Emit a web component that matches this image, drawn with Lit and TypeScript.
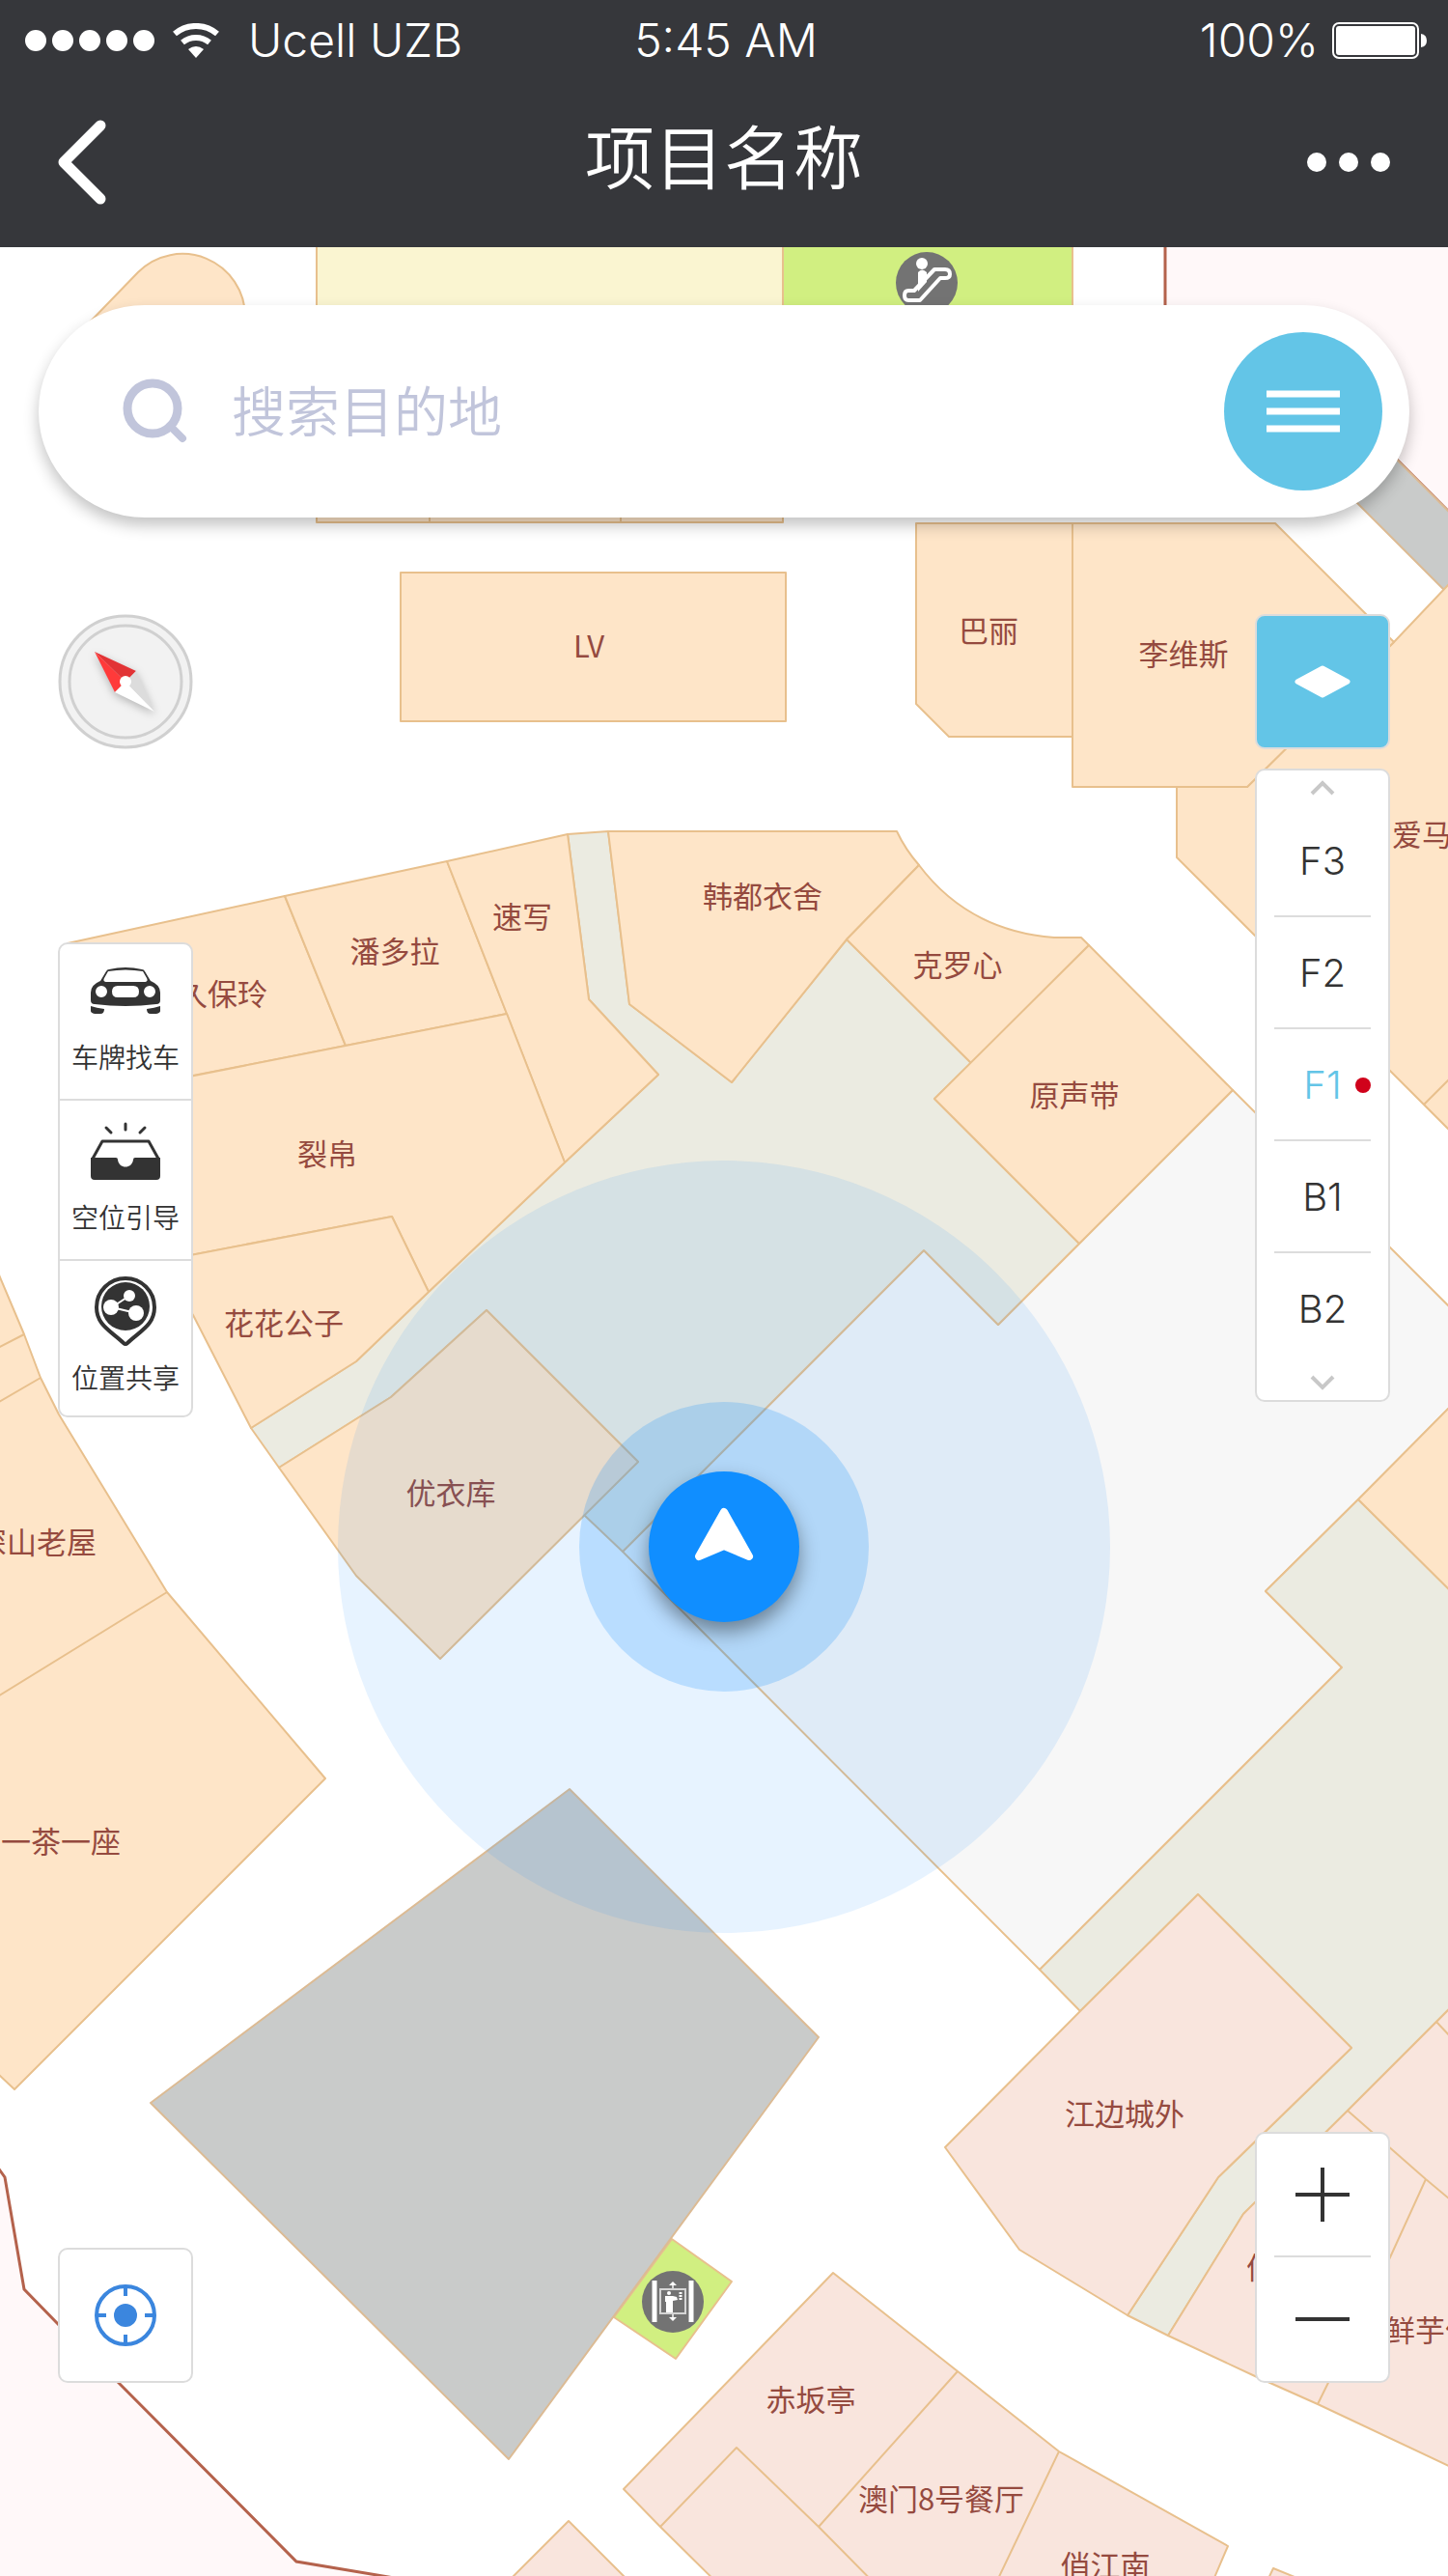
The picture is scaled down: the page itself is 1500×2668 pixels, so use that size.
import { LitElement, html, svg, css } from "lit";
import { customElement, state } from "lit/decorators.js";

type Kind = "shop" | "food" | "hall" | "court" | "solid" | "lift" | "lounge" | "line";

interface Area {
  kind: Kind;
  d: string;
}

interface Label {
  text: string;
  x: number;
  y: number;
  anchor?: "start" | "middle" | "end";
}

const AREAS: Area[] = [
  // upper strip
  { kind: "shop", d: "M82 345L143 282A65 65 0 0 1 254 328V382H82Z" },
  { kind: "lounge", d: "M328 240H811V400H328Z" },
  { kind: "lift", d: "M811 240H1111V400H811Z" },
  { kind: "shop", d: "M328 400H811V541H328ZM445 400V541M643 400V541" },
  { kind: "solid", d: "M1340 369L1520 549V635L1340 455Z" },
  { kind: "shop", d: "M949 542H1111V763H983L949 729Z" },
  { kind: "shop", d: "M1219 815V888L1520 1189V585L1444 665L1292 815ZM1475 1144L1520 1099" },
  { kind: "shop", d: "M1111 542H1321L1444 665L1292 815H1111Z" },
  { kind: "shop", d: "M415 593H814V747H415Z" },
  // courts and corridors
  {
    kind: "court",
    d: "M1277 1129L1520 1372V1439L1407 1553L1311 1648L1390 1727L1077 2040L645 1607L957 1295L1034 1372L1118 1288Z",
  },
  {
    kind: "hall",
    d: "M588 864L630 861L652 1040L758 1121L877 973L1006 1101L968 1138L1118 1288L1034 1372L957 1295L645 1607L605 1569L661 1514L504 1357L405 1447L289 1520L260 1479L369 1410L444 1338L585 1204L682 1113L610 1035Z",
  },
  {
    kind: "hall",
    d: "M1407 1553L1311 1648L1390 1727L1077 2040L1119 2083L1241 1962L1400 2121L1262 2255L1168 2398L1210 2419L1288 2293L1396 2186L1520 2062V1665Z",
  },
  // central shops
  { kind: "shop", d: "M70 977L295 928L358 1083L200 1114L90 1136Z" },
  { kind: "shop", d: "M295 928L463 892L525 1050L358 1083Z" },
  { kind: "shop", d: "M463 892L588 864L610 1035L682 1113L585 1204L525 1050Z" },
  { kind: "shop", d: "M90 1136L358 1083L525 1050L585 1204L444 1338L406 1260L166 1306Z" },
  { kind: "shop", d: "M166 1306L406 1260L444 1338L369 1410L260 1479L200 1362Z" },
  { kind: "shop", d: "M289 1520L405 1447L504 1357L661 1514L456 1718L369 1632Z" },
  { kind: "shop", d: "M630 861H929Q938 880 952 896L877 973L758 1121L652 1040Z" },
  { kind: "shop", d: "M952 896C985 940 1030 966 1092 971H1120L1128 979L1006 1101L877 973Z" },
  { kind: "shop", d: "M1128 979L1277 1129L1118 1288L968 1138Z" },
  { kind: "shop", d: "M1407 1553L1520 1439V1665Z" },
  // left edge
  {
    kind: "shop",
    d: "M-20 1268L0 1323L25 1382L42 1427L61 1465L173 1649L337 1842L15 2164L-20 2131ZM25 1382L-20 1405M42 1427L-20 1463M173 1649L-20 1768",
  },
  // service block and lift
  { kind: "lift", d: "M696 2319L758 2363L700 2443L636 2400Z" },
  { kind: "solid", d: "M590 1853L848 2110L527 2547L156 2178Z" },
  // food court
  { kind: "food", d: "M1241 1962L1400 2121L1262 2255L1168 2398L1056 2330L979 2224L1119 2083Z" },
  {
    kind: "food",
    d: "M1210 2419L1288 2293L1396 2186L1520 2062V2563L1365 2490L1300 2461ZM1396 2186L1477 2257L1520 2293M1477 2257L1440 2338L1365 2490M1488 2094L1520 2128",
  },
  {
    kind: "food",
    d: "M863 2354L992 2456L1097 2539L1272 2637L1245 2700H768L684 2617L646 2578ZM684 2617L763 2535L848 2617L930 2700M848 2617L992 2456M1097 2539L1020 2700",
  },
  { kind: "food", d: "M589 2611L500 2700H678Z" },
  { kind: "food", d: "M1319 2660L1400 2693L1300 2700Z" },
];

const LABELS: Label[] = [
  { text: "LV", x: 610, y: 669 },
  { text: "巴丽", x: 1024, y: 653 },
  { text: "李维斯", x: 1226, y: 677 },
  { text: "爱马仕", x: 1442, y: 864, anchor: "start" },
  { text: "速写", x: 541, y: 949 },
  { text: "潘多拉", x: 409, y: 985 },
  { text: "久保玲", x: 277, y: 1029, anchor: "end" },
  { text: "韩都衣舍", x: 790, y: 928 },
  { text: "克罗心", x: 992, y: 999 },
  { text: "原声带", x: 1113, y: 1134 },
  { text: "裂帛", x: 339, y: 1195 },
  { text: "花花公子", x: 294, y: 1370 },
  { text: "优衣库", x: 467, y: 1546 },
  { text: "深山老屋", x: 100, y: 1597, anchor: "end" },
  { text: "一茶一座", x: 125, y: 1907, anchor: "end" },
  { text: "江边城外", x: 1165, y: 2189 },
  { text: "赤坂亭", x: 840, y: 2485 },
  { text: "澳门8号餐厅", x: 975, y: 2588 },
  { text: "俏江南", x: 1145, y: 2657 },
  { text: "俏", x: 1291, y: 2348, anchor: "start" },
  { text: "鲜芋仙", x: 1435, y: 2413, anchor: "start" },
];

@customElement("floor-map")
export class FloorMap extends LitElement {
  static styles = css`
    :host {
      display: block;
    }
    .canvas {
      display: block;
      width: 100%;
      height: auto;
      background: #fff;
    }
    .area {
      stroke: #e8c08d;
      stroke-width: 2;
      stroke-linejoin: round;
    }
    .shop {
      fill: #fee5c8;
    }
    .food {
      fill: #f9e5dd;
    }
    .hall {
      fill: #ebebe1;
    }
    .court {
      fill: #f7f7f7;
    }
    .solid {
      fill: #c9cbca;
      stroke: #dcbb94;
    }
    .lift {
      fill: #d1ef81;
    }
    .lounge {
      fill: #faf5d1;
    }
    .outside {
      fill: #fff8f9;
      stroke: #b4624c;
      stroke-width: 3;
    }
    .label {
      fill: #954a3f;
      font-family: "Noto Sans CJK SC", sans-serif;
      font-size: 31px;
      font-weight: 400;
    }
    .badge {
      fill: #737373;
    }
    .glyph {
      fill: #fff;
    }
    .outline {
      fill: none;
      stroke: #fff;
    }
    .halo {
      fill: #108eff;
      fill-opacity: 0.1;
    }
    .ring {
      fill: #108eff;
      fill-opacity: 0.21;
    }
    .core {
      fill: #108eff;
      filter: drop-shadow(0 10px 10px rgba(0, 0, 0, 0.4));
    }
    .arrow {
      fill: #fff;
      stroke: #fff;
      stroke-width: 8;
      stroke-linejoin: round;
    }
  `;

  render() {
    return html`
      <svg class="canvas" viewBox="0 256 1500 2412" role="img" aria-label="F1">
        <path class="outside" d="M1207 240V380H1351L1540 569V240Z"></path>
        <path class="outside" d="M-20 2220L5 2255L25 2371L61 2408L122 2467L307 2653L480 2682V2720H-20Z"></path>
        ${AREAS.map((a) => svg`<path class="area ${a.kind}" d=${a.d}></path>`)}
        ${LABELS.map(
          (l) => svg`<text class="label" x=${l.x} y=${l.y + 12} text-anchor=${l.anchor ?? "middle"}>${l.text}</text>`,
        )}
        <g>
          <circle class="badge" cx="960" cy="293" r="32"></circle>
          <circle class="glyph" cx="955" cy="273" r="6"></circle>
          <path class="glyph" d="M951 282Q955 277 960 282V292L951 302Z"></path>
          <path
            class="outline"
            stroke-width="4"
            stroke-linejoin="round"
            d="M941 301H947L968 279H979Q984 279 984 284Q984 288 979 288H974L953 311H941Q937 311 937 306Q937 301 941 301Z"
          ></path>
        </g>
        <g>
          <circle class="badge" cx="697" cy="2384" r="32"></circle>
          <path class="outline" stroke-width="5" d="M678 2362V2405M716 2362V2405"></path>
          <path class="outline" stroke-width="2" opacity="0.7" d="M684 2371H710V2396H684ZM697 2366V2370M697 2397V2400"></path>
          <path class="glyph" d="M693 2367L697 2363L701 2367ZM693 2400L697 2404L701 2400Z"></path>
          <circle class="glyph" cx="693" cy="2375" r="2"></circle>
          <path class="glyph" d="M689 2378H697L701 2379L702 2382L697 2383V2395H690V2384H689Z"></path>
          <path class="outline" stroke-width="3" stroke-dasharray="2 1" d="M705 2374V2383"></path>
        </g>
        <circle class="halo" cx="750" cy="1602" r="400"></circle>
        <circle class="ring" cx="750" cy="1602" r="150"></circle>
        <circle class="core" cx="750" cy="1602" r="78"></circle>
        <path class="arrow" d="M750 1566L776 1612L750 1601L724 1612Z"></path>
      </svg>
    `;
  }
}

@customElement("app-root")
export class AppRoot extends LitElement {
  static styles = css`
    :host {
      display: block;
      font-family: Inter, "Noto Sans CJK SC", sans-serif;
      font-weight: 400;
      color: #333;
    }
    button {
      display: flex;
      align-items: center;
      justify-content: center;
      margin: 0;
      padding: 0;
      border: 0;
      background: none;
      font: inherit;
      color: inherit;
      cursor: pointer;
    }
    svg {
      display: block;
      flex: none;
    }
    .header {
      background: #36373b;
      color: #fff;
    }
    .status {
      display: grid;
      grid-template-columns: 1fr auto 1fr;
      align-items: center;
      height: 84px;
      padding: 0 22px 0 26px;
      font-size: 48px;
      line-height: 60px;
      font-weight: 300;
    }
    .carrier,
    .power {
      display: flex;
      align-items: center;
    }
    .signal {
      margin-right: 19px;
    }
    .wifi {
      margin-right: 30px;
    }
    .power {
      justify-content: flex-end;
      gap: 14px;
    }
    .nav {
      display: grid;
      grid-template-columns: 1fr auto 1fr;
      align-items: center;
      height: 168px;
      padding: 0 56px 4px;
    }
    .title {
      margin: 0;
      padding-bottom: 8px;
      font-size: 72px;
      line-height: 96px;
      font-weight: 350;
    }
    .back {
      justify-self: start;
    }
    .more {
      justify-self: end;
    }
    .stage {
      display: grid;
      overflow: hidden;
    }
    .stage > * {
      grid-area: 1 / 1;
    }
    .overlay {
      display: flex;
      flex-direction: column;
      gap: 100px;
      padding: 60px 40px 200px;
      z-index: 1;
    }
    .search {
      display: flex;
      align-items: center;
      height: 220px;
      padding: 0 28px 0 86px;
      box-sizing: border-box;
      border-radius: 110px;
      background: #fff;
      box-shadow: 0 8px 16px rgba(0, 0, 0, 0.24);
    }
    .query {
      flex: 1;
      min-width: 0;
      margin: 0 40px 0 42px;
      padding: 2px 0 0;
      border: 0;
      outline: 0;
      background: none;
      font: inherit;
      font-size: 56px;
      line-height: 84px;
      font-weight: 350;
      color: #333;
    }
    .query::placeholder {
      color: #c1c5db;
      opacity: 1;
    }
    .menu {
      width: 164px;
      height: 164px;
      border-radius: 50%;
      background: #63c5e7;
    }
    .tools {
      flex: 1;
      display: flex;
      justify-content: space-between;
      padding: 0 20px;
    }
    .rail {
      display: flex;
      flex-direction: column;
      width: 140px;
    }
    .card {
      box-sizing: border-box;
      border: 2px solid #dcdcdc;
      border-radius: 10px;
      background: #fff;
      overflow: hidden;
    }
    .tile {
      width: 140px;
      height: 140px;
    }
    .layers {
      margin-bottom: 20px;
      background: #63c5e7;
    }
    .compass {
      margin-bottom: 200px;
    }
    .push {
      margin-top: auto;
    }
    .action {
      flex-direction: column;
      width: 100%;
      padding: 12px 0 20px;
      border-bottom: 2px solid #dcdcdc;
      font-size: 28px;
      line-height: 44px;
      font-weight: 350;
    }
    .action:first-child {
      padding-top: 8px;
    }
    .action:last-child {
      padding-bottom: 16px;
      border-bottom: 0;
    }
    .step {
      width: 100%;
      height: 36px;
    }
    .floors {
      margin: 0 18px;
      padding: 0;
      list-style: none;
    }
    .floor {
      position: relative;
      width: 100%;
      height: 116px;
      padding-top: 2px;
      border-bottom: 2px solid #dcdcdc;
      font-size: 40px;
      line-height: 48px;
      font-weight: 300;
    }
    .floors > li:last-child .floor {
      border-bottom-color: transparent;
    }
    .current {
      color: #63c5e7;
    }
    .dot {
      position: absolute;
      right: 0;
      top: 50px;
      width: 16px;
      height: 16px;
      border-radius: 50%;
      background: #d0021b;
    }
    .zoom {
      padding: 0 18px;
    }
    .scale {
      width: 100%;
      height: 128px;
      box-sizing: border-box;
    }
    .scale:first-child {
      border-bottom: 2px solid #dcdcdc;
    }
  `;

  @state() private floor = "F1";

  private floors = ["F3", "F2", "F1", "B1", "B2"];

  private car = svg`<svg width="72" height="88" viewBox="0 0 72 88" fill="#333">
    <path fill-rule="evenodd" d="M19 18Q36 14 53 18Q55 18 56 20L62 30Q72 34 72 42V50Q72 54 68 54Q52 56 36 56Q20 56 4 54Q0 54 0 50V42Q0 34 10 30L16 20Q17 18 19 18ZM14 27Q12 31 17 31H55Q60 31 58 27L54 20Q36 17 18 20ZM28 35Q22 35 22 41T28 47H44Q50 47 50 41T44 35ZM11 35A6 6 0 1 0 11 47A6 6 0 1 0 11 35ZM61 35A6 6 0 1 0 61 47A6 6 0 1 0 61 35Z"/>
    <path d="M0 56Q6 58 14 59Q14 64 10 64H4Q0 63 0 61ZM72 56Q66 58 58 59Q58 64 62 64H68Q72 63 72 61Z"/>
  </svg>`;

  private tray = svg`<svg width="72" height="88" viewBox="0 0 72 88">
    <path d="M36 12V18M16 16L21 21M56 16L51 21" stroke="#333" stroke-width="3" stroke-linecap="round"/>
    <path d="M2 48L12 30H60L70 48" fill="none" stroke="#333" stroke-width="3" stroke-linejoin="round"/>
    <path d="M0 47H26Q28 47 28 49C29 59 43 59 44 49Q44 47 46 47H72V66Q72 70 68 70H4Q0 70 0 66Z" fill="#333"/>
  </svg>`;

  private pin = svg`<svg width="72" height="88" viewBox="0 0 72 88">
    <path d="M36 6A30 30 0 0 0 6 36C6 54 20 60 34 73Q36 75 38 73C52 60 66 54 66 36A30 30 0 0 0 36 6Z" fill="none" stroke="#333" stroke-width="4"/>
    <circle cx="36" cy="35" r="25" fill="#333"/>
    <path d="M40 24L22 36L47 42" fill="none" stroke="#fff" stroke-width="2"/>
    <circle cx="21" cy="36" r="8" fill="#fff"/><circle cx="40" cy="24" r="6" fill="#fff"/><circle cx="47" cy="42" r="8" fill="#fff"/>
  </svg>`;

  private renderHeader() {
    return html`
      <header class="header">
        <div class="status">
          <div class="carrier">
            <svg class="signal" width="134" height="22" viewBox="0 0 134 22" fill="#fff">
              ${[11, 39, 67, 95, 123].map((cx) => svg`<circle cx=${cx} cy="11" r="11"/>`)}
            </svg>
            <svg class="wifi" width="48" height="36" viewBox="0 0 48 36">
              <path d="M2 11A34 34 0 0 1 46 11M10 20A22 22 0 0 1 38 20" fill="none" stroke="#fff" stroke-width="6" />
              <path d="M16 27Q24 21 32 27L24 36Z" fill="#fff" />
            </svg>
            <span>Ucell UZB</span>
          </div>
          <span>5:45 AM</span>
          <div class="power">
            <span>100%</span>
            <svg width="98" height="38" viewBox="0 0 98 38">
              <rect x="1" y="1" width="88" height="36" rx="6" fill="none" stroke="#fff" stroke-width="2" />
              <rect x="4" y="4" width="82" height="30" rx="3" fill="#fff" />
              <path d="M92 12Q98 13 98 19T92 26Z" fill="#fff" />
            </svg>
          </div>
        </div>
        <div class="nav">
          <button class="back" aria-label="返回">
            <svg width="56" height="92" viewBox="0 0 56 92">
              <path d="M48 8L10 46L48 84" fill="none" stroke="#fff" stroke-width="11" stroke-linecap="round" stroke-linejoin="round" />
            </svg>
          </button>
          <h1 class="title">项目名称</h1>
          <button class="more" aria-label="更多">
            <svg width="90" height="20" viewBox="0 0 90 20" fill="#fff">
              <circle cx="10" cy="10" r="10" /><circle cx="43" cy="10" r="10" /><circle cx="76" cy="10" r="10" />
            </svg>
          </button>
        </div>
      </header>
    `;
  }

  private renderSearch() {
    return html`
      <form class="search" role="search" @submit=${(e: Event) => e.preventDefault()}>
        <svg width="72" height="68" viewBox="0 0 72 68" fill="none" stroke="#c1c5db" stroke-width="9">
          <circle cx="32" cy="31" r="26" />
          <path d="M50 49L63 62" stroke-width="8" stroke-linecap="round" />
        </svg>
        <input class="query" type="text" placeholder="搜索目的地" aria-label="搜索目的地" />
        <button class="menu" type="button" aria-label="菜单">
          <svg width="76" height="44" viewBox="0 0 76 44">
            <path d="M0 4H76M0 22H76M0 40H76" stroke="#fff" stroke-width="7" />
          </svg>
        </button>
      </form>
    `;
  }

  private renderLeft() {
    return html`
      <div class="rail">
        <button class="compass" aria-label="指南针">
          <svg width="140" height="140" viewBox="0 0 140 140">
            <circle cx="70" cy="70" r="68" fill="#f2f2f2" stroke="#d0d0d0" stroke-width="3" />
            <circle cx="70" cy="70" r="58" fill="none" stroke="#d0d0d0" stroke-width="3" />
            <g style="filter: drop-shadow(0 3px 4px rgba(0, 0, 0, 0.25))">
              <path d="M38 39L81 59L70 70Z" fill="#e23335" />
              <path d="M38 39L59 81L70 70Z" fill="#ff3a3a" />
              <path d="M100 101L81 59L70 70Z" fill="#dcdcdc" />
              <path d="M100 101L59 81L70 70Z" fill="#fff" />
            </g>
            <circle cx="70" cy="70" r="6" fill="#fff" />
          </svg>
        </button>
        <div class="card">
          <button class="action">${this.car}<span>车牌找车</span></button>
          <button class="action">${this.tray}<span>空位引导</span></button>
          <button class="action">${this.pin}<span>位置共享</span></button>
        </div>
        <button class="card tile push" aria-label="定位">
          <svg width="64" height="64" viewBox="0 0 64 64">
            <circle cx="32" cy="32" r="30" fill="none" stroke="#3b86de" stroke-width="4" />
            <circle cx="32" cy="32" r="12" fill="#3b86de" />
            <path d="M32 2V12M32 52V62M2 32H12M52 32H62" stroke="#3b86de" stroke-width="4" />
          </svg>
        </button>
      </div>
    `;
  }

  private renderRight() {
    return html`
      <div class="rail">
        <button class="card tile layers" aria-label="图层">
          <svg width="60" height="34" viewBox="0 0 60 34">
            <path d="M30 3L56 17L30 31L4 17Z" fill="#fff" stroke="#fff" stroke-width="5" stroke-linejoin="round" />
          </svg>
        </button>
        <div class="card">
          <button class="step" aria-label="上一层">
            <svg width="26" height="16" viewBox="0 0 26 16"><path d="M2 14L13 3L24 14" fill="none" stroke="#c8c8c8" stroke-width="4" /></svg>
          </button>
          <ul class="floors">
            ${this.floors.map(
              (f) => html`<li>
                <button class="floor ${f === this.floor ? "current" : ""}" @click=${() => (this.floor = f)}>
                  ${f}${f === this.floor ? html`<span class="dot"></span>` : null}
                </button>
              </li>`,
            )}
          </ul>
          <button class="step" aria-label="下一层">
            <svg width="26" height="16" viewBox="0 0 26 16"><path d="M2 2L13 13L24 2" fill="none" stroke="#c8c8c8" stroke-width="4" /></svg>
          </button>
        </div>
        <div class="card zoom push">
          <button class="scale" aria-label="放大">
            <svg width="56" height="56" viewBox="0 0 56 56"><path d="M28 0V56M0 28H56" stroke="#333" stroke-width="4" /></svg>
          </button>
          <button class="scale" aria-label="缩小">
            <svg width="56" height="4" viewBox="0 0 56 4"><path d="M0 2H56" stroke="#333" stroke-width="4" /></svg>
          </button>
        </div>
      </div>
    `;
  }

  render() {
    return html`
      ${this.renderHeader()}
      <main class="stage">
        <floor-map></floor-map>
        <div class="overlay">
          ${this.renderSearch()}
          <div class="tools">${this.renderLeft()}${this.renderRight()}</div>
        </div>
      </main>
    `;
  }
}
